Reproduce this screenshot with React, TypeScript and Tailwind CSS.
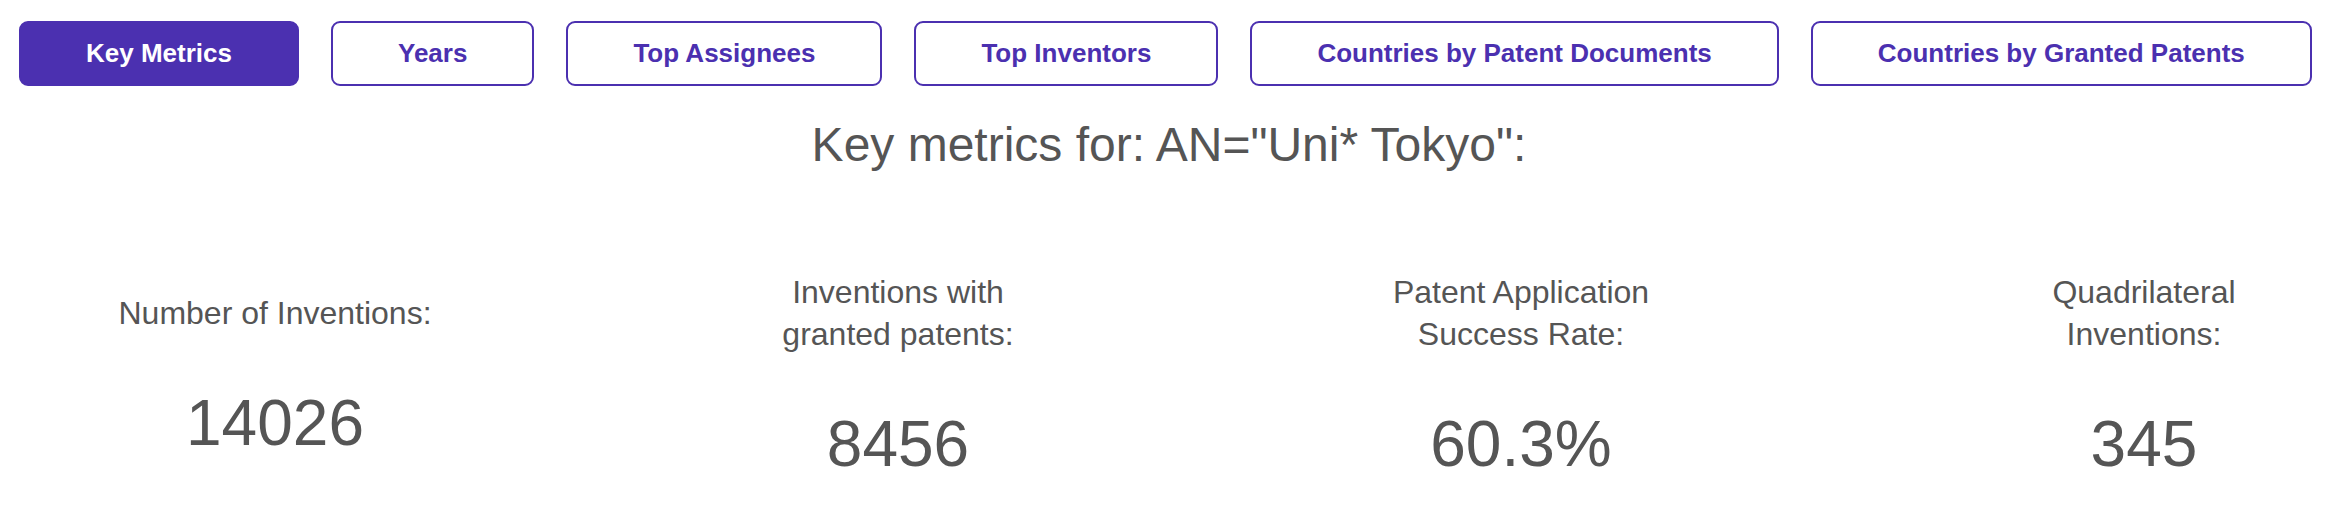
const tabs = [
  "Key Metrics",
  "Years",
  "Top Assignees",
  "Top Inventors",
  "Countries by Patent Documents",
  "Countries by Granted Patents",
];

const metrics: { label: string[]; value: string }[] = [
  { label: ["Number of Inventions:"], value: "14026" },
  { label: ["Inventions with", "granted patents:"], value: "8456" },
  { label: ["Patent Application", "Success Rate:"], value: "60.3%" },
  { label: ["Quadrilateral", "Inventions:"], value: "345" },
];

export default function App() {
  return (
    <div
      className="w-[2338px] h-[518px] bg-white text-[#555555] overflow-hidden"
      style={{ fontFamily: '"Liberation Sans", Arial, sans-serif' }}
    >
      <nav className="flex gap-[32px] pl-[19px] pt-[21px]">
        {tabs.map((t, i) => (
          <button
            key={t}
            className={
              i === 0
                ? "flex h-[65px] items-center rounded-[9px] border-2 border-[#4b30b0] bg-[#4b30b0] px-[65px] text-[26px] font-bold text-white"
                : "flex h-[65px] items-center rounded-[9px] border-2 border-[#4b30b0] bg-white px-[65px] text-[26px] font-bold text-[#4b30b0]"
            }
          >
            {t}
          </button>
        ))}
      </nav>

      <h1 className="mt-[30px] text-center text-[48px] leading-[58px] font-normal">
        Key metrics for: AN="Uni* Tokyo":
      </h1>

      <div className="mt-[97px] grid h-[210px] grid-cols-[repeat(4,380px)] items-center gap-x-[243px] pl-[85px]">
        {metrics.map((m) => (
          <div key={m.value} className="flex flex-col items-center text-center">
            <div className="text-[32px] leading-[42px]">
              {m.label.map((l) => (
                <div key={l}>{l}</div>
              ))}
            </div>
            <div className="mt-[52px] text-[64px] leading-[74px]">{m.value}</div>
          </div>
        ))}
      </div>
    </div>
  );
}
